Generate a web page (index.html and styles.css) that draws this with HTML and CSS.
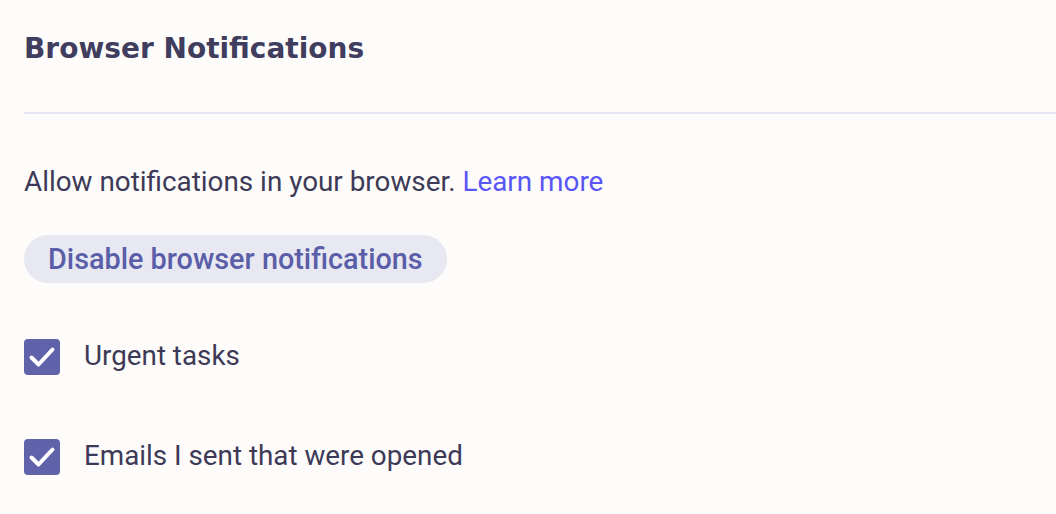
FILE: index.html
```html
<!DOCTYPE html>
<html lang="en">
<head>
<meta charset="utf-8">
<title>Browser Notifications</title>
<link rel="stylesheet" href="styles.css">
</head>
<body>
<main class="panel">
  <h2 class="title">Browser Notifications</h2>
  <hr class="divider">
  <p class="intro">Allow notifications in your browser. <a class="link" href="#">Learn more</a></p>
  <button class="pill" type="button">Disable browser notifications</button>
  <ul class="options">
    <li class="option">
      <span class="check"><svg viewBox="0 0 36 36" width="36" height="36"><path d="M7.5 18.5 L14.5 25.5 L28.5 10.5" fill="none" stroke="#fff" stroke-width="4" stroke-linecap="round" stroke-linejoin="round"/></svg></span>
      <span class="label">Urgent tasks</span>
    </li>
    <li class="option">
      <span class="check"><svg viewBox="0 0 36 36" width="36" height="36"><path d="M7.5 18.5 L14.5 25.5 L28.5 10.5" fill="none" stroke="#fff" stroke-width="4" stroke-linecap="round" stroke-linejoin="round"/></svg></span>
      <span class="label">Emails I sent that were opened</span>
    </li>
  </ul>
</main>
</body>
</html>
```

FILE: styles.css
```css
html, body {
  margin: 0;
  padding: 0;
  background: #fdfcfa;
}
body {
  font-family: Roboto, "Liberation Sans", sans-serif;
  color: #3d3a57;
}
.panel {
  padding: 25px 0 0 24px;
  display: flex;
  flex-direction: column;
  align-items: flex-start;
}
.title {
  margin: 0;
  font-family: "DejaVu Sans", sans-serif;
  font-weight: 700;
  font-size: 28px;
  line-height: 48px;
  color: #403d5e;
}
.divider {
  align-self: stretch;
  margin: 39px 0 0 0;
  border: 0;
  height: 2px;
  background: #e7e5f3;
}
.intro {
  margin: 52px 0 0 0;
  font-size: 27.85px;
  line-height: 32px;
}
.link {
  color: #5a55f5;
  text-decoration: none;
}
.pill {
  margin-top: 37px;
  height: 48px;
  padding: 0 24px;
  border: 0;
  border-radius: 24px;
  background: #e8e8f2;
  color: #5a5ea8;
  font-family: Roboto, "Liberation Sans", sans-serif;
  font-weight: 500;
  font-size: 28.8px;
}
.options {
  list-style: none;
  margin: 56px 0 0 0;
  padding: 0;
  display: flex;
  flex-direction: column;
  gap: 64px;
}
.option {
  display: flex;
  align-items: center;
  gap: 24px;
  height: 36px;
}
.check {
  width: 36px;
  height: 36px;
  border-radius: 4px;
  background: #6063a9;
  display: block;
}
.check svg { display: block; }
.label {
  font-size: 27.8px;
  line-height: 32px;
  margin-top: -2px;
}
```
